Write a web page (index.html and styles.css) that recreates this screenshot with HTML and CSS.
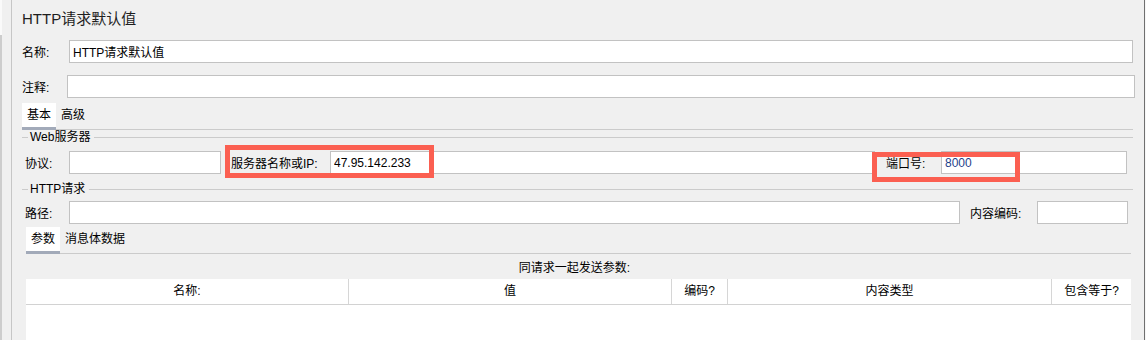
FILE: index.html
```html
<!DOCTYPE html>
<html lang="zh">

<head>
  <meta charset="UTF-8">
  <meta name="viewport" content="width=device-width, initial-scale=1.0">
  <title>HTTP请求默认值</title>
  <link rel="stylesheet" href="styles.css">
</head>

<body>
  <div class="window">
    <div class="side"><div class="side-bar"></div></div>

    <div class="panel">
      <h1 class="title">HTTP请求默认值</h1>

      <div class="row row-name">
        <label class="lbl">名称:</label>
        <input class="field" type="text" value="HTTP请求默认值">
      </div>

      <div class="row row-comment">
        <label class="lbl">注释:</label>
        <input class="field" type="text">
      </div>

      <div class="tabs">
        <span class="tab current">基本</span>
        <span class="tab">高级</span>
      </div>

      <div class="group-title"><span>Web服务器</span></div>
      <div class="row row-server">
        <label class="lbl">协议:</label>
        <input class="field f-protocol" type="text">
        <label class="lbl l-host">服务器名称或IP:</label>
        <input class="field f-host" type="text" value="47.95.142.233">
        <label class="lbl l-port">端口号:</label>
        <input class="field f-port" type="text" value="8000">
        <!-- 红框标注 -->
        <div class="mark mark-host"></div>
        <div class="mark mark-port"></div>
      </div>

      <div class="group-title group-http"><span>HTTP请求</span></div>
      <div class="row row-path">
        <label class="lbl">路径:</label>
        <input class="field f-path" type="text">
        <label class="lbl l-enc">内容编码:</label>
        <input class="field f-enc" type="text">
      </div>

      <div class="params">
        <div class="tabs">
          <span class="tab current">参数</span>
          <span class="tab">消息体数据</span>
        </div>
        <div class="caption">同请求一起发送参数:</div>
        <div class="table">
          <div class="thead">
            <div class="th">名称:</div>
            <div class="th">值</div>
            <div class="th">编码?</div>
            <div class="th">内容类型</div>
            <div class="th">包含等于?</div>
          </div>
          <div class="tbody"></div>
        </div>
      </div>
    </div>

    <div class="rule"></div>
  </div>
</body>

</html>
```

FILE: styles.css
```css
* {
  margin: 0;
  padding: 0;
  box-sizing: border-box;
}

body {
  background-color: #f0f0f0;
  font-family: "Liberation Sans", "Noto Sans CJK SC", sans-serif;
  font-size: 12px;
  color: #000;
}

.window {
  display: flex;
  width: 1146px;
  height: 340px;
  overflow: hidden;
}

.side {
  width: 12px;
  border-right: 1px solid #c6c6c6;
}

.side-bar {
  width: 2px;
  height: 100%;
  background: linear-gradient(#fafafa 0, #fafafa 35px, #cdcdcd 35px);
}

.rule {
  width: 2px;
  background-color: #6f6f6f;
  border-right: 1px solid #f7f7f7;
}

.panel {
  flex: 1;
  padding: 0 11px 0 10px;
  display: flex;
  flex-direction: column;
}

.title {
  margin-top: 8px;
  height: 22px;
  line-height: 22px;
  font-size: 15px;
  font-weight: normal;
  color: #1e1e1e;
}

.row {
  display: flex;
  align-items: center;
  height: 23px;
}

.lbl {
  white-space: nowrap;
}

.field {
  height: 23px;
  border: 1px solid #c2c2c2;
  background-color: #fff;
  padding: 0 3px;
  font-family: inherit;
  font-size: 12px;
  color: #000;
  outline: none;
  min-width: 0;
}

.row-name {
  margin-top: 10px;
}

.row-name .lbl {
  width: 47px;
}

.row-name .field {
  flex: 1;
}

.row-comment {
  margin-top: 12px;
  margin-right: -2px;
}

.row-comment .lbl {
  width: 45px;
}

.row-comment .field {
  flex: 1;
}

/* 选项卡 */
.tabs {
  display: flex;
  border-bottom: 1px solid #cbcbcb;
  margin-top: 5px;
}

.tab {
  height: 27px;
  line-height: 24px;
  padding: 0 5px;
  margin-bottom: -1px;
  border-bottom: 3px solid transparent;
}

.tab.current {
  background-color: #fff;
  border-bottom-color: #a2aab9;
}

/* 分组标题 */
.group-title {
  display: flex;
  align-items: center;
  height: 13px;
  margin-top: 1px;
}

.group-title::before {
  content: "";
  width: 6px;
  border-top: 1px solid #cbcbcb;
}

.group-title::after {
  content: "";
  flex: 1;
  border-top: 1px solid #cbcbcb;
}

.group-title span {
  padding: 0 4px 0 2px;
  line-height: 13px;
}

.group-http {
  margin-top: 9px;
}

.row-server {
  position: relative;
  margin-top: 7px;
  margin-right: 6px;
  padding-left: 3px;
}

.row-server .lbl {
  width: 44px;
}

.f-protocol {
  width: 152px;
}

.row-server .l-host {
  width: 99px;
  margin-left: 10px;
}

.f-host {
  flex: 1;
}

.row-server .l-port {
  width: 55px;
  margin-left: 11px;
}

.f-port {
  width: 186px;
  color: #1f3f8a;
}

.mark {
  position: absolute;
  border: 5px solid #fb5f51;
}

.mark-host {
  left: 203px;
  top: -6px;
  width: 209px;
  height: 33px;
}

.mark-port {
  left: 850px;
  top: 1px;
  width: 148px;
  height: 30px;
}

.row-path {
  margin-top: 5px;
  margin-right: 5px;
  padding-left: 3px;
}

.row-path .lbl {
  width: 44px;
}

.f-path {
  flex: 1;
}

.row-path .l-enc {
  width: 67px;
  margin-left: 10px;
}

.f-enc {
  width: 91px;
}

/* 参数 */
.params {
  flex: 1;
  margin: 3px 2px 0 4px;
  display: flex;
  flex-direction: column;
}

.params .tabs {
  margin-top: 0;
}

.caption {
  margin-top: 6px;
  line-height: 16px;
  text-align: center;
  padding-right: 8px;
}

.table {
  flex: 1;
  margin-top: 3px;
  background-color: #fff;
}

.thead {
  display: grid;
  grid-template-columns: 323px 323px 56px 324px 1fr;
  height: 26px;
  border-bottom: 1px solid #d2d2d2;
}

.th {
  line-height: 25px;
  text-align: center;
  border-right: 1px solid #d6d6d6;
}

.th:last-child {
  border-right: none;
}
```
